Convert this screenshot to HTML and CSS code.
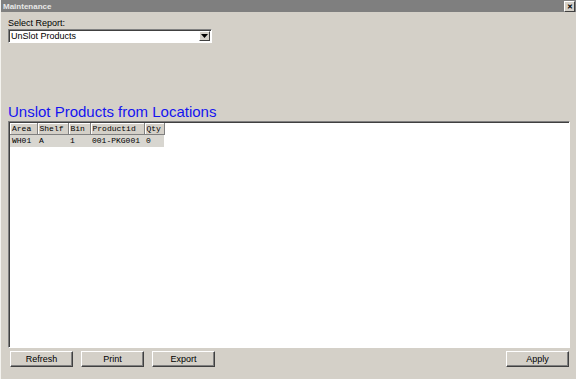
FILE: index.html
```html
<!DOCTYPE html>
<html lang="en">
<head>
    <meta charset="UTF-8">
    <title>Maintenance</title>
    <link rel="stylesheet" href="styles.css">
</head>
<body>
    <div class="window">
        <div class="titlebar">
            <span class="title">Maintenance</span>
            <span class="close">&#x2715;</span>
        </div>
        <div class="content">
            <label class="label">Select Report:</label>
            <div class="select">
                <span class="select-text">UnSlot Products</span>
                <span class="select-btn"><svg width="7" height="4" viewBox="0 0 7 4"><path d="M0 0H7L3.5 4Z" fill="#000"/></svg></span>
            </div>

            <h1 class="heading">Unslot Products from Locations</h1>

            <div class="grid">
                <table>
                    <thead>
                        <tr>
                            <th class="c-area">Area</th>
                            <th class="c-shelf">Shelf</th>
                            <th class="c-bin">Bin</th>
                            <th class="c-prod">Productid</th>
                            <th class="c-qty">Qty</th>
                        </tr>
                    </thead>
                    <tbody>
                        <tr>
                            <td>WH01</td>
                            <td>A</td>
                            <td>1</td>
                            <td>001-PKG001</td>
                            <td>0</td>
                        </tr>
                    </tbody>
                </table>
            </div>

            <div class="buttons">
                <button class="btn">Refresh</button>
                <button class="btn">Print</button>
                <button class="btn">Export</button>
                <button class="btn apply">Apply</button>
            </div>
        </div>
    </div>
</body>
</html>
```

FILE: styles.css
```css
/* ventana */
body {
    margin: 0;
    padding: 0;
    background-color: #d4d0c8;
    font-family: "Liberation Sans", Arial, sans-serif;
    font-size: 9px;
    color: #000;
}

.window {
    width: 576px;
    height: 379px;
    display: flex;
    flex-direction: column;
    box-sizing: border-box;
    border-left: 1px solid #f4f3ef;
}

.titlebar {
    height: 12px;
    background-color: #7f7f7f;
    display: flex;
    align-items: center;
    justify-content: space-between;
    padding: 0 1px 0 2px;
}

.title {
    color: #e8e8e8;
    font-size: 8px;
    font-weight: bold;
}

.close {
    width: 9px;
    height: 9px;
    background-color: #d4d0c8;
    border: 1px solid;
    border-color: #fff #404040 #404040 #fff;
    font-size: 7px;
    font-weight: bold;
    line-height: 9px;
    text-align: center;
    box-sizing: content-box;
}

.content {
    flex: 1;
    display: flex;
    flex-direction: column;
    padding: 5px 7px 0 7px;
}

.label {
    display: block;
    height: 12px;
    line-height: 12px;
}

.select {
    width: 204px;
    height: 14px;
    box-sizing: border-box;
    background-color: #fff;
    border: 1px solid;
    border-color: #808080 #fff #fff #808080;
    box-shadow: inset 1px 1px 0 #404040;
    display: flex;
    align-items: center;
    justify-content: space-between;
    padding-left: 2px;
}

.select-btn {
    width: 11px;
    height: 10px;
    margin-right: 1px;
    background-color: #d4d0c8;
    border: 1px solid;
    border-color: #fff #404040 #404040 #fff;
    box-sizing: border-box;
    display: flex;
    align-items: center;
    justify-content: center;
}

.heading {
    margin: 60px 0 0 0;
    font-size: 15px;
    font-weight: normal;
    color: #1414f0;
    line-height: 18px;
    height: 18px;
}

/* tabla */
.grid {
    width: 562px;
    height: 227px;
    box-sizing: border-box;
    background-color: #fff;
    border: 1px solid;
    border-color: #808080 #fff #fff #808080;
    box-shadow: inset 1px 1px 0 #404040;
    padding: 1px 0 0 1px;
}

table {
    border-collapse: collapse;
    font-family: "Liberation Mono", "DejaVu Sans Mono", monospace;
    font-size: 8px;
}

th {
    background-color: #d4d0c8;
    font-weight: normal;
    text-align: left;
    height: 11px;
    padding: 0 2px;
    box-sizing: border-box;
    border-right: 1px solid #808080;
    border-bottom: 1px solid #808080;
    box-shadow: inset 1px 1px 0 #fff;
}

td {
    background-color: #d8d6d0;
    height: 12px;
    padding: 0 2px;
}

.c-area { width: 27px; }
.c-shelf { width: 31px; }
.c-bin { width: 22px; }
.c-prod { width: 54px; }
.c-qty { width: 20px; }

/* botones */
.buttons {
    display: flex;
    gap: 8px;
    margin-top: 3px;
    padding-left: 2px;
}

.btn {
    width: 63px;
    height: 16px;
    padding: 0;
    font-family: "Liberation Sans", Arial, sans-serif;
    font-size: 9px;
    background-color: #d4d0c8;
    border: 1px solid;
    border-color: #fff #404040 #404040 #fff;
    box-shadow: inset -1px -1px 0 #808080;
}

.apply {
    margin-left: auto;
    margin-right: 0;
}
```
